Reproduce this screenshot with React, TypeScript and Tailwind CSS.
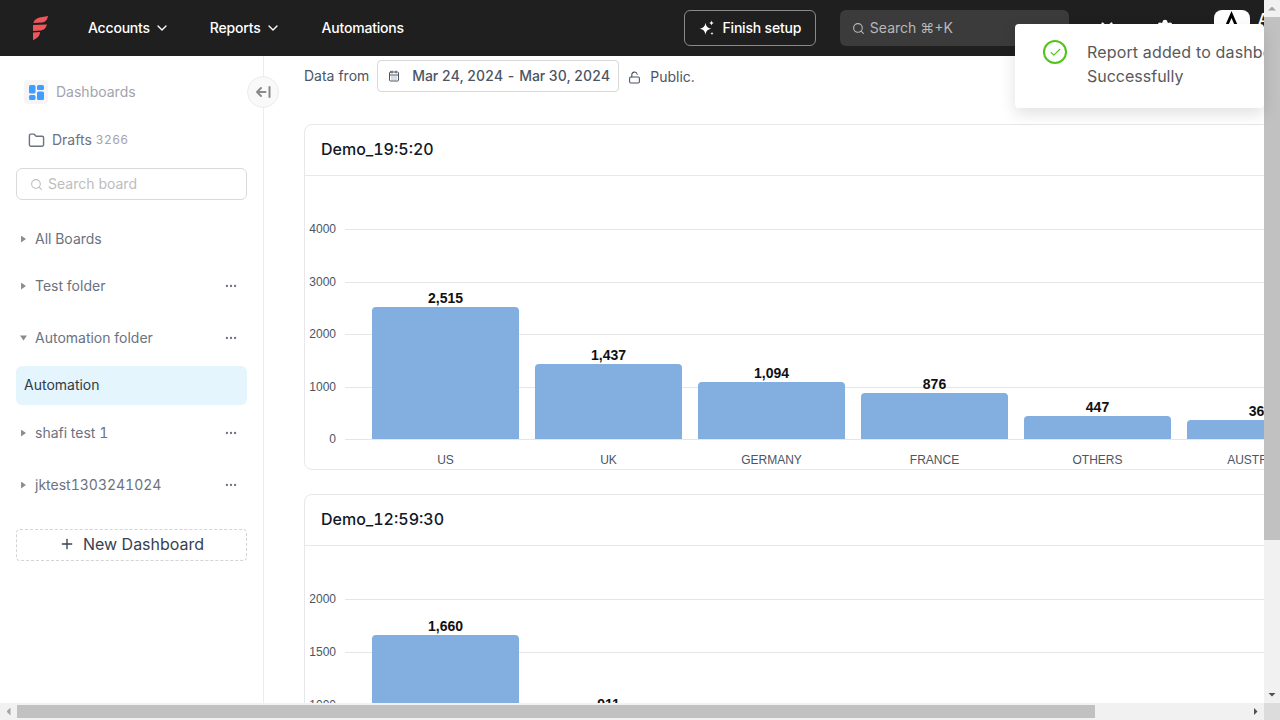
import { ChevronDown, Search, CalendarDays, LockOpen, Folder, Ellipsis, Plus, Check, X, Settings } from "lucide-react";

const inter = "font-['Inter',sans-serif]";

type Bar = { x: number; top: number; label: string; name?: string };

const firstBars: Bar[] = [
  { x: 372, top: 307, label: "2,515", name: "US" },
  { x: 535, top: 364, label: "1,437", name: "UK" },
  { x: 698, top: 382, label: "1,094", name: "GERMANY" },
  { x: 861, top: 393, label: "876", name: "FRANCE" },
  { x: 1024, top: 416, label: "447", name: "OTHERS" },
  { x: 1187, top: 420, label: "365", name: "AUSTRALIA" },
];

const secondBars: Bar[] = [
  { x: 372, top: 635, label: "1,660" },
  { x: 535, top: 713, label: "911" },
];

function BarChart({ top, height, ticks, bars, base }: { top: number; height: number; ticks: [string, number][]; bars: Bar[]; base: number }) {
  return (
    <svg width="1198" height={height} viewBox={`305 ${top} 1198 ${height}`} className="block">
      {ticks.map(([t, y]) => (
        <g key={t}>
          <line x1="345" x2="1504" y1={y + 0.5} y2={y + 0.5} stroke="#e6e6e6" />
          <text x="336" y={y + 4} textAnchor="end" fontSize="12" fill="#4b5563" fontFamily="Liberation Sans">{t}</text>
        </g>
      ))}
      {bars.map((b) => (
        <g key={b.label}>
          <path d={`M${b.x} ${base}V${b.top + 4}a4 4 0 0 1 4-4h139a4 4 0 0 1 4 4V${base}z`} fill="#83aee0" />
          <text x={b.x + 73.5} y={b.top - 4} textAnchor="middle" fontSize="14" fontWeight="700" fill="#111111" fontFamily="Liberation Sans">{b.label}</text>
          {b.name && <text x={b.x + 73.5} y={464} textAnchor="middle" fontSize="12" fill="#4b5563" fontFamily="Liberation Sans">{b.name}</text>}
        </g>
      ))}
    </svg>
  );
}

function Card({ title, children, className }: { title: string; children: React.ReactNode; className?: string }) {
  return (
    <section className={`w-[1200px] rounded-lg border border-[#e8e8ec] bg-white shrink-0 ${className ?? ""}`}>
      <h3 className="h-[51px] flex items-center pb-0.5 pl-4 border-b border-[#e8e8ec] text-base font-medium tabular-nums text-[#111827]">{title}</h3>
      {children}
    </section>
  );
}

function FolderRow({ name, more, open, className }: { name: string; more?: boolean; open?: boolean; className: string }) {
  return (
    <div className={`flex items-center justify-between pl-1 pr-[9px] text-sm tabular-nums text-[#6b7280] ${className}`}>
      <div className="flex items-center">
        <span className={`w-[7px] h-[7px] mr-2 bg-[#8c8c8c] ${open ? "[clip-path:polygon(0_15%,100%_15%,50%_85%)]" : "[clip-path:polygon(15%_0,85%_50%,15%_100%)]"}`} />
        <span>{name}</span>
      </div>
      {more && <Ellipsis size={14} className="text-[#6b7280]" />}
    </div>
  );
}

export default function App() {
  return (
    <div className={`relative w-[1280px] h-[720px] overflow-hidden flex flex-col bg-white ${inter}`}>
      <div className="flex flex-1 min-h-0">
        <div className="w-[1264px] flex flex-col overflow-hidden">
          {/* header */}
          <header className="h-14 shrink-0 bg-[#1f1f1f] flex items-center pl-[33px] text-white text-sm font-medium tracking-[-0.2px] whitespace-nowrap">
            <svg width="15" height="24" viewBox="0 0 15 24" className="shrink-0" fill="#f0555a">
              <path d="M0.5 7 C1 3.5 4 2 8 1.2 L15 0 C14.5 3 13 6 9 6.5 Z" />
              <path d="M0 9 L14 8.5 C13 12 11 14 8 14.5 L0 15 Z" />
              <path d="M0 16.5 L7 16 C7 20 4 22.5 0 24 Z" />
            </svg>
            <div className="flex items-center ml-10">
              Accounts
              <ChevronDown size={16} className="ml-1" />
            </div>
            <div className="flex items-center ml-[40px]">
              Reports
              <ChevronDown size={16} className="ml-1" />
            </div>
            <div className="ml-[41px]">Automations</div>
            <button className="ml-[280px] w-[132px] h-9 shrink-0 rounded-md border border-[#8a8a8a] flex items-center justify-center gap-2">
              <svg width="16" height="16" viewBox="0 0 16 16" fill="white">
                <path d="M6.5 2.5 C7 6.5 8.5 8 12.5 8.8 C8.5 9.5 7 11 6.5 15 C6 11 4.5 9.5 0.5 8.8 C4.5 8 6 6.5 6.5 2.5Z" />
                <path d="M12.5 0.5 C12.8 2 13.5 2.7 15 3 C13.5 3.3 12.8 4 12.5 5.5 C12.2 4 11.5 3.3 10 3 C11.5 2.7 12.2 2 12.5 0.5Z" />
                <path d="M13 12 C13.2 12.9 13.6 13.3 14.5 13.5 C13.6 13.7 13.2 14.1 13 15 C12.8 14.1 12.4 13.7 11.5 13.5 C12.4 13.3 12.8 12.9 13 12Z" />
              </svg>
              Finish setup
            </button>
            <div className="ml-6 w-[229px] h-9 shrink-0 rounded-md bg-[#3b3b3b] flex items-center pl-3 gap-[5px] text-[#b8b8b8] font-normal tracking-normal">
              <Search size={13} />
              Search ⌘+K
            </div>
            <X size={18} strokeWidth={3} className="ml-[29px] shrink-0" />
            <Settings size={18} className="ml-10 shrink-0" fill="white" />
            <div className="ml-10 w-9 h-9 shrink-0 rounded-lg bg-white flex justify-center pt-px">
              <svg width="13" height="15" viewBox="0 0 13 15" fill="black">
                <path d="M6.5 0 L13 15 H10 L6.5 7 L3 15 H0 Z" />
              </svg>
            </div>
            <span className="ml-2 -mt-[18px] text-base">A</span>
          </header>

          <div className="flex flex-1 min-h-0">
            {/* sidebar */}
            <aside className="relative w-[264px] shrink-0 border-r border-[#ececec] px-4 text-sm">
              <div className="flex items-center mt-6 ml-2">
                <span className="w-6 h-6 rounded bg-[#f5f5f5] flex items-center justify-center">
                  <svg width="15" height="15" viewBox="0 0 15 15" fill="#3f9eff">
                    <rect x="0" y="0" width="6.5" height="8.5" rx="1.5" />
                    <rect x="0" y="10" width="6.5" height="5" rx="1.5" />
                    <rect x="8" y="0" width="7" height="5" rx="1.5" />
                    <rect x="8" y="6.5" width="7" height="8.5" rx="1.5" />
                  </svg>
                </span>
                <span className="ml-2 text-[#a3a3ad]">Dashboards</span>
              </div>
              <div className="flex items-center mt-[26px] ml-3 text-[#6b7280]">
                <Folder size={17} />
                <span className="ml-[7px]">Drafts</span>
                <span className="ml-1 text-xs text-[#a3a3ad] tracking-[0.4px] tabular-nums">3266</span>
              </div>
              <div className="mt-[18px] h-8 rounded-md border border-[#d9d9d9] flex items-center pl-[13px] text-[#bdbdbd]">
                <Search size={13} />
                <span className="ml-[5px]">Search board</span>
              </div>

              <FolderRow name="All Boards" className="mt-[29px]" />
              <FolderRow name="Test folder" more className="mt-[27px]" />
              <FolderRow name="Automation folder" more open className="mt-[32px]" />
              <div className="mt-[18px] h-[39px] pb-0.5 rounded-md bg-[#e4f5fe] flex items-center pl-2 text-[#333a45]">Automation</div>
              <FolderRow name="shafi test 1" more className="mt-[18px]" />
              <FolderRow name="jktest1303241024" more className="mt-[32px]" />

              <button className="mt-[34px] w-full h-8 pb-0.5 rounded border border-dashed border-[#d4d4d4] flex items-center justify-center text-base text-[#374151]">
                <Plus size={16} className="mr-2" />
                New Dashboard
              </button>

              <button className="absolute -right-[16px] top-5 w-8 h-8 rounded-full bg-[#f9f9f9] border border-[#ececec] flex items-center justify-center">
                <svg width="16" height="14" viewBox="0 0 16 14" fill="none" stroke="#8a8a8a" strokeWidth="2" strokeLinecap="round" strokeLinejoin="round">
                  <path d="M10.5 7H2M6 3L2 7l4 4M14.5 2v10" />
                </svg>
              </button>
            </aside>

            {/* main */}
            <main className="flex-1 min-w-0 overflow-hidden pl-10">
              <div className="h-8 mt-1 flex items-center text-sm text-[#4b5563]">
                <span className="mr-2">Data from</span>
                <div className="w-[242px] h-8 rounded border border-[#d9d9d9] flex items-center pl-[10px] text-[#4b5563] font-medium tabular-nums tracking-[-0.1px]">
                  <CalendarDays size={12} />
                  <span className="ml-3">Mar 24, 2024 - Mar 30, 2024</span>
                </div>
                <LockOpen size={13} className="ml-[9px] mt-0.5" />
                <span className="ml-[9px] mt-px">Public.</span>
              </div>
              <Card title="Demo_19:5:20" className="mt-8">
                <BarChart top={176} height={293} base={439} bars={firstBars} ticks={[["4000", 229], ["3000", 282], ["2000", 334], ["1000", 387], ["0", 439]]} />
              </Card>
              <Card title="Demo_12:59:30" className="mt-6">
                <BarChart top={546} height={300} base={846} bars={secondBars} ticks={[["2000", 599], ["1500", 652], ["1000", 705]]} />
              </Card>
            </main>
          </div>
        </div>

        {/* vertical scrollbar */}
        <div className="w-4 shrink-0 bg-[#f1f1f1] flex flex-col items-center">
          <span className="h-[17px] flex items-center"><span className="w-2 h-1 bg-[#a3a3a3] [clip-path:polygon(50%_0,100%_100%,0_100%)]" /></span>
          <div className="w-full h-[523px] bg-[#c1c1c1]" />
          <div className="flex-1" />
          <span className="h-[17px] flex items-center"><span className="w-2 h-1 bg-[#505050] [clip-path:polygon(0_0,100%_0,50%_100%)]" /></span>
        </div>
      </div>

      {/* horizontal scrollbar */}
      <div className="h-[17px] shrink-0 bg-[#f1f1f1] flex items-center">
        <span className="w-[17px] flex justify-center"><span className="w-1 h-2 bg-[#a3a3a3] [clip-path:polygon(100%_0,100%_100%,0_50%)]" /></span>
        <div className="w-[1078px] h-[13px] bg-[#c1c1c1]" />
        <div className="flex-1" />
        <span className="w-[17px] flex justify-center"><span className="w-1 h-2 bg-[#505050] [clip-path:polygon(0_0,100%_50%,0_100%)]" /></span>
        <span className="w-4 h-full bg-[#dcdcdc]" />
      </div>

      {/* toast */}
      <div className="absolute left-[1015px] top-6 w-[249px] h-[84px] bg-white rounded-sm shadow-[0_6px_16px_rgba(0,0,0,0.12)] overflow-hidden flex pl-7 pt-4">
        <span className="w-6 h-6 shrink-0 rounded-full border-2 border-[#52c41a] flex items-center justify-center">
          <Check size={13} className="text-[#52c41a]" />
        </span>
        <div className="ml-5 text-base leading-6 text-[#595959] whitespace-nowrap">
          <div className="tracking-[0.15px]">Report added to dashboard</div>
          <div>Successfully</div>
        </div>
      </div>
    </div>
  );
}
